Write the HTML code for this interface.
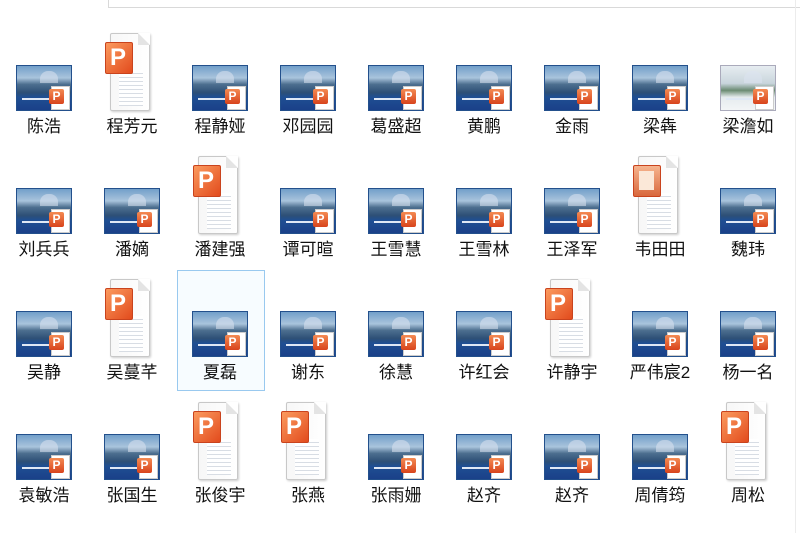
<!DOCTYPE html>
<html><head><meta charset="utf-8"><style>
body{margin:0;width:800px;height:533px;background:#fff;position:relative;overflow:hidden;font-family:"Liberation Sans","Noto Sans CJK SC",sans-serif}
.top{position:absolute;left:108px;top:-2px;width:700px;height:8px;border:1px solid #d9d9d9;background:#fff}
.vl{position:absolute;left:795px;top:0;width:1px;height:533px;background:#ececec}
.c{position:absolute;width:88px;height:80px}
.l{position:absolute;left:0;width:88px;top:52px;text-align:center;font-size:17px;color:#111;line-height:20px}
.t{position:absolute;left:16px;top:0;width:56px;height:46px;background:linear-gradient(#6d9cc8 0%,#a9c4dc 28%,#4d6f8f 42%,#2d4f76 60%,#1f4f93 70%,#1a3f88 100%);box-shadow:inset 0 0 0 1px #23508c}
.t:before{content:"";position:absolute;left:24px;top:6px;width:18px;height:12px;border-radius:8px 8px 0 0;background:rgba(220,228,240,.55)}
.t:after{content:"";position:absolute;left:6px;top:33px;width:36px;height:2px;background:#dfe8f5}
.t.lt{background:linear-gradient(#e8eef2 0%,#c9d5dc 40%,#6b8b73 55%,#e5ebee 70%,#f4f6f7 100%);box-shadow:inset 0 0 0 1px #aab}
.b{position:absolute;right:2px;bottom:1px;width:17px;height:22px;background:#fff;border:1px solid #ccc;z-index:2}
.b i{position:absolute;left:-3px;top:2px;width:15px;height:15px;background:linear-gradient(#f48a52,#d8441c);border-radius:2px;color:#fff;font-style:normal;font-size:12px;font-weight:bold;text-align:center;line-height:15px}
.d{position:absolute;left:22px;top:-32px;width:38px;height:76px;background:linear-gradient(90deg,#f7f7f7,#fff);border:1px solid #c8c8c8;border-radius:2px;box-shadow:1px 1px 2px #ccc}
.d:before{content:"";position:absolute;right:-1px;top:-1px;border-style:solid;border-width:0 12px 12px 0;border-color:#fff #fff #e4e4e4 #e4e4e4}
.d .ln{position:absolute;left:8px;right:6px;top:36px;height:36px;background:repeating-linear-gradient(#fff 0 3px,#d8dde4 3px 4px)}
.d .p{position:absolute;left:-6px;top:8px;width:26px;height:30px;background:linear-gradient(135deg,#fb9a5e,#e24b1d);border:1px solid #c9431d;border-radius:2px;color:#fff;font-weight:bold;font-size:24px;line-height:30px;text-indent:4px}
.d .p.o{background:linear-gradient(#f6b48e,#d9683d);font-size:0}
.d .p.o:after{content:"";position:absolute;left:5px;top:5px;width:15px;height:19px;background:#fbe8d8}
.sel{position:absolute;left:177px;top:270px;width:86px;height:119px;border:1px solid #99c9ef;background:rgba(204,232,255,.15)}
</style></head><body>
<div class="top"></div><div class="vl"></div>
<div class="sel"></div>

<div class="c" style="left:0;top:65px"><div class="t"><div class="b"><i>P</i></div></div><div class="l">陈浩</div></div>
<div class="c" style="left:88px;top:65px"><div class="d"><div class="ln"></div><div class="p">P</div></div><div class="l">程芳元</div></div>
<div class="c" style="left:176px;top:65px"><div class="t"><div class="b"><i>P</i></div></div><div class="l">程静娅</div></div>
<div class="c" style="left:264px;top:65px"><div class="t"><div class="b"><i>P</i></div></div><div class="l">邓园园</div></div>
<div class="c" style="left:352px;top:65px"><div class="t"><div class="b"><i>P</i></div></div><div class="l">葛盛超</div></div>
<div class="c" style="left:440px;top:65px"><div class="t"><div class="b"><i>P</i></div></div><div class="l">黄鹏</div></div>
<div class="c" style="left:528px;top:65px"><div class="t"><div class="b"><i>P</i></div></div><div class="l">金雨</div></div>
<div class="c" style="left:616px;top:65px"><div class="t"><div class="b"><i>P</i></div></div><div class="l">梁犇</div></div>
<div class="c" style="left:704px;top:65px"><div class="t lt"><div class="b"><i>P</i></div></div><div class="l">梁澹如</div></div>

<div class="c" style="left:0;top:188px"><div class="t"><div class="b"><i>P</i></div></div><div class="l">刘兵兵</div></div>
<div class="c" style="left:88px;top:188px"><div class="t"><div class="b"><i>P</i></div></div><div class="l">潘嫡</div></div>
<div class="c" style="left:176px;top:188px"><div class="d"><div class="ln"></div><div class="p">P</div></div><div class="l">潘建强</div></div>
<div class="c" style="left:264px;top:188px"><div class="t"><div class="b"><i>P</i></div></div><div class="l">谭可暄</div></div>
<div class="c" style="left:352px;top:188px"><div class="t"><div class="b"><i>P</i></div></div><div class="l">王雪慧</div></div>
<div class="c" style="left:440px;top:188px"><div class="t"><div class="b"><i>P</i></div></div><div class="l">王雪林</div></div>
<div class="c" style="left:528px;top:188px"><div class="t"><div class="b"><i>P</i></div></div><div class="l">王泽军</div></div>
<div class="c" style="left:616px;top:188px"><div class="d"><div class="ln"></div><div class="p o"></div></div><div class="l">韦田田</div></div>
<div class="c" style="left:704px;top:188px"><div class="t"><div class="b"><i>P</i></div></div><div class="l">魏玮</div></div>

<div class="c" style="left:0;top:311px"><div class="t"><div class="b"><i>P</i></div></div><div class="l">吴静</div></div>
<div class="c" style="left:88px;top:311px"><div class="d"><div class="ln"></div><div class="p">P</div></div><div class="l">吴蔓芊</div></div>
<div class="c" style="left:176px;top:311px"><div class="t"><div class="b"><i>P</i></div></div><div class="l">夏磊</div></div>
<div class="c" style="left:264px;top:311px"><div class="t"><div class="b"><i>P</i></div></div><div class="l">谢东</div></div>
<div class="c" style="left:352px;top:311px"><div class="t"><div class="b"><i>P</i></div></div><div class="l">徐慧</div></div>
<div class="c" style="left:440px;top:311px"><div class="t"><div class="b"><i>P</i></div></div><div class="l">许红会</div></div>
<div class="c" style="left:528px;top:311px"><div class="d"><div class="ln"></div><div class="p">P</div></div><div class="l">许静宇</div></div>
<div class="c" style="left:616px;top:311px"><div class="t"><div class="b"><i>P</i></div></div><div class="l">严伟宸2</div></div>
<div class="c" style="left:704px;top:311px"><div class="t"><div class="b"><i>P</i></div></div><div class="l">杨一名</div></div>

<div class="c" style="left:0;top:434px"><div class="t"><div class="b"><i>P</i></div></div><div class="l">袁敏浩</div></div>
<div class="c" style="left:88px;top:434px"><div class="t"><div class="b"><i>P</i></div></div><div class="l">张国生</div></div>
<div class="c" style="left:176px;top:434px"><div class="d"><div class="ln"></div><div class="p">P</div></div><div class="l">张俊宇</div></div>
<div class="c" style="left:264px;top:434px"><div class="d"><div class="ln"></div><div class="p">P</div></div><div class="l">张燕</div></div>
<div class="c" style="left:352px;top:434px"><div class="t"><div class="b"><i>P</i></div></div><div class="l">张雨姗</div></div>
<div class="c" style="left:440px;top:434px"><div class="t"><div class="b"><i>P</i></div></div><div class="l">赵齐</div></div>
<div class="c" style="left:528px;top:434px"><div class="t"><div class="b"><i>P</i></div></div><div class="l">赵齐</div></div>
<div class="c" style="left:616px;top:434px"><div class="t"><div class="b"><i>P</i></div></div><div class="l">周倩筠</div></div>
<div class="c" style="left:704px;top:434px"><div class="d"><div class="ln"></div><div class="p">P</div></div><div class="l">周松</div></div>
</body></html>
